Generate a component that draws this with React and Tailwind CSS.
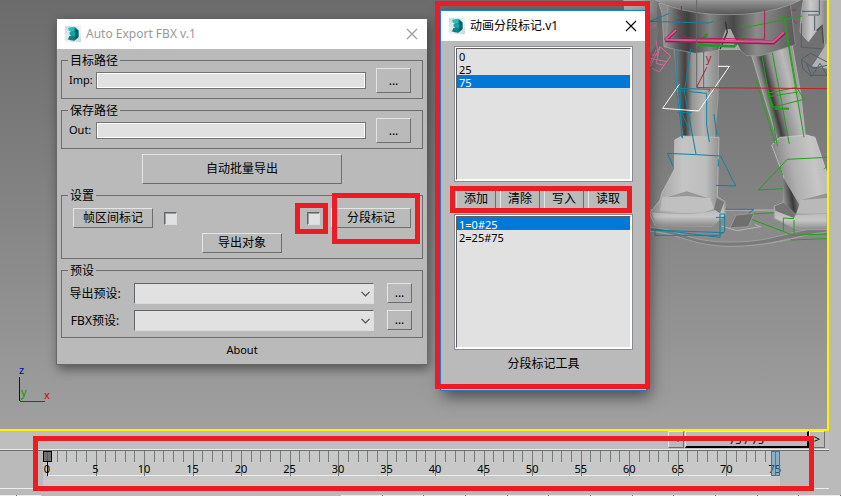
import { useId } from "react";

const RAISED =
  "border border-t-[#e4e4e4] border-l-[#e4e4e4] border-r-[#6d6d6d] border-b-[#6d6d6d] bg-[#bababa] text-black flex items-center justify-center whitespace-nowrap";
const SUNKEN =
  "border border-t-[#5f666d] border-l-[#5f666d] border-r-[#dcdcdc] border-b-[#dcdcdc]";

function MaxIcon() {
  return (
    <svg width="16" height="16" viewBox="0 0 16 16" className="shrink-0" aria-hidden="true">
      <defs>
        <linearGradient id="tile" x1="0" y1="0" x2="1" y2="1">
          <stop offset="0" stopColor="#c3dade" />
          <stop offset=".6" stopColor="#f1f5f6" />
          <stop offset="1" stopColor="#c4d4d8" />
        </linearGradient>
      </defs>
      <path d="M0 0H16V16H0Z" fill="url(#tile)" />
      <path d="M1 13L8 11L14 12L8 15.500Z" fill="#a9c4c7" />
      <path d="M3.500 2L9.500 1L13.500 4.500V11L9.500 14.500L3.500 13.500L4 10.500L6 9.500L4.500 8.500V6.500L6 5.500L4 4.500Z" fill="#12a5a6" />
      <path d="M9.500 1L13.500 4.500V11L9.500 14.500V10L10.500 7.500L9.500 5Z" fill="#05626a" />
      <path d="M3.500 2L9.500 1L9.500 5L6 5.500L4 4.500Z" fill="#29bdb9" />
      <path d="M4 10.500L9.500 10V14.500L3.500 13.500Z" fill="#098086" />
    </svg>
  );
}

function TitleBar({ title, muted }) {
  return (
    <header className="flex h-[30px] items-center gap-[5px] bg-white pr-[9px] pl-2">
      <MaxIcon />
      <h1 className={muted ? "flex-1 text-xs text-[#999999]" : "flex-1 text-xs text-black"}>{title}</h1>
      <button
        type="button"
        aria-label="关闭"
        className={muted ? "text-[#999999]" : "text-black"}
      >
        <svg width="12" height="12" viewBox="0 0 12 12" aria-hidden="true">
          <path d="M1 1L11 11M11 1L1 11" stroke="currentColor" strokeWidth="1.100" />
        </svg>
      </button>
    </header>
  );
}

function Group({ title, children }) {
  return (
    <fieldset className="min-w-0 border border-[#6d6d6d] pl-[6px]">
      <legend className="h-3 px-[2px] text-xs leading-[14px]">{title}</legend>
      {children}
    </fieldset>
  );
}

function PathRow({ label }) {
  const id = useId();
  return (
    <div className="flex items-center pt-[2px] pr-[11px] pb-[5px]">
      <label htmlFor={id} className="w-7 pl-px">{label}</label>
      <input
        id={id}
        type="text"
        className="h-[17px] min-w-0 flex-1 border border-[#747474] bg-[#e1e1e1] px-1 outline outline-1 -outline-offset-2 outline-white"
      />
      <button type="button" className={RAISED + " ml-[10px] h-[25px] w-[35px] text-xs"}>...</button>
    </div>
  );
}

function PresetRow({ label }) {
  const id = useId();
  return (
    <div className="flex">
      <label htmlFor={id} className="flex h-[21px] w-[54px] items-center justify-center whitespace-nowrap text-xs">
        {label}
      </label>
      <div className="relative ml-3 flex flex-1">
        <select id={id} className={SUNKEN + " h-[21px] w-full appearance-none bg-[#e1e1e1] px-1"} />
        <svg width="9" height="6" viewBox="0 0 9 6" className="pointer-events-none absolute top-2 right-1" aria-hidden="true">
          <path d="M.5 .8L4.500 4.800L8.500 .8" fill="none" stroke="#4c4c4c" strokeWidth="1.200" />
        </svg>
      </div>
      <button type="button" className={RAISED + " ml-[13px] h-5 w-[25px] text-xs"}>...</button>
    </div>
  );
}

function Check({ label, className }) {
  return (
    <input
      type="checkbox"
      aria-label={label}
      className={SUNKEN + " h-[13px] w-[13px] appearance-none bg-[#e1e1e1] shadow-[inset_1px_1px_0_#9a9fa4] " + className}
    />
  );
}

function ExportWindow() {
  return (
    <section className="absolute top-[19px] left-[56px] w-[371px] border-b border-l border-[#686868] bg-[#bababa] shadow-[2px_4px_10px_rgba(0,0,0,0.45)]">
      <TitleBar title="Auto Export FBX v.1" muted />
      <div className="flex flex-col gap-[5px] px-1 pt-[5px]">
        <Group title="目标路径"><PathRow label="Imp:" /></Group>
        <Group title="保存路径"><PathRow label="Out:" /></Group>
        <button type="button" className={RAISED + " h-[30px] w-[200px] self-center text-xs"}>自动批量导出</button>
        <Group title="设置">
          <div className="flex flex-col gap-[5px] pt-[7px] pr-[11px] pb-[5px] pl-[5px]">
            <div className="flex items-center">
              <button type="button" className={RAISED + " h-5 w-20 text-xs"}>帧区间标记</button>
              <Check label="帧区间标记" className="ml-[11px]" />
              <Check label="分段标记" className="ml-auto" />
              <button type="button" className={RAISED + " ml-[11px] h-5 w-20 text-xs"}>分段标记</button>
            </div>
            <button type="button" className={RAISED + " h-5 w-20 self-center text-xs"}>导出对象</button>
          </div>
        </Group>
        <Group title="预设">
          <div className="flex flex-col gap-[6px] pt-[7px] pr-[10px] pb-[6px]">
            <PresetRow label="导出预设:" />
            <PresetRow label="FBX预设:" />
          </div>
        </Group>
      </div>
      <p className="pt-1 pb-[7px] text-center leading-[15px]">About</p>
    </section>
  );
}

function ListBox({ label, items, selected }) {
  return (
    <div className="border border-[#868c96] bg-white p-px">
      <select
        size={10}
        aria-label={label}
        defaultValue={selected}
        className="block h-[132px] w-full overflow-hidden border border-t-[#5f5f5f] border-r-white border-b-white border-l-[#5f5f5f] bg-[#e1e1e1] p-0 outline-none"
      >
        {items.map((item) => (
          <option
            key={item}
            value={item}
            className="block h-[13px] min-h-0 px-[2px] py-0 leading-[11px] text-black checked:bg-[linear-gradient(#0078d7,#0078d7)] checked:[-webkit-text-fill-color:white]"
          >
            {item}
          </option>
        ))}
      </select>
    </div>
  );
}

function SegmentWindow() {
  return (
    <section className="absolute top-[10px] left-[440px] w-[207px] border border-[#1c7fd0] bg-[#bababa] shadow-[3px_6px_14px_rgba(0,0,0,0.5)]">
      <TitleBar title="动画分段标记.v1" />
      <div className="flex flex-col pt-[5px] pr-[13px] pl-[13px]">
        <ListBox label="帧" items={["0", "25", "75"]} selected="75" />
        <div className="my-[6px] flex gap-1 px-[2px]">
          {["添加", "清除", "写入", "读取"].map((name) => (
            <button key={name} type="button" className={RAISED + " h-[21px] w-10 pt-px text-xs"}>{name}</button>
          ))}
        </div>
        <div className="-mt-px">
          <ListBox label="分段" items={["1=0#25", "2=25#75"]} selected="1=0#25" />
        </div>
      </div>
      <p className="pt-[6px] pb-[18px] text-center text-xs">分段标记工具</p>
    </section>
  );
}

function Character() {
  return (
    <svg width="207" height="260" viewBox="-60 0 621 780" className="absolute top-0 right-0" aria-hidden="true">
      <defs>
        <linearGradient id="legL" x1="0" x2="1" y1="0" y2="0">
          <stop offset="0" stopColor="#858585" />
          <stop offset=".14" stopColor="#5a5a5a" />
          <stop offset=".24" stopColor="#404040" />
          <stop offset=".4" stopColor="#969696" />
          <stop offset=".65" stopColor="#b4b4b4" />
          <stop offset="1" stopColor="#8a8a8a" />
        </linearGradient>
        <linearGradient id="legR" gradientUnits="userSpaceOnUse" x1="350" x2="486" y1="260" y2="225">
          <stop offset="0" stopColor="#a8a8a8" />
          <stop offset=".14" stopColor="#8a8a8a" />
          <stop offset=".26" stopColor="#3c3c3c" />
          <stop offset=".42" stopColor="#909090" />
          <stop offset=".7" stopColor="#bababa" />
          <stop offset="1" stopColor="#8a8a8a" />
        </linearGradient>
        <linearGradient id="hip" x1="0" x2="1" y1="0" y2="0">
          <stop offset="0" stopColor="#8f8f8f" />
          <stop offset=".1" stopColor="#545454" />
          <stop offset=".17" stopColor="#3e3e3e" />
          <stop offset=".34" stopColor="#848484" />
          <stop offset=".45" stopColor="#5c5c5c" />
          <stop offset=".52" stopColor="#484848" />
          <stop offset=".7" stopColor="#8b8b8b" />
          <stop offset=".85" stopColor="#757575" />
          <stop offset="1" stopColor="#585858" />
        </linearGradient>
        <linearGradient id="belly" x1="0" x2="0" y1="0" y2="1">
          <stop offset="0" stopColor="#989898" />
          <stop offset="1" stopColor="#565656" />
        </linearGradient>
        <linearGradient id="bootL" x1="0" x2="1" y1="0" y2="0">
          <stop offset="0" stopColor="#9c9c9c" />
          <stop offset=".45" stopColor="#c4c4c4" />
          <stop offset=".75" stopColor="#bdbdbd" />
          <stop offset="1" stopColor="#7d7d7d" />
        </linearGradient>
        <linearGradient id="bootR" x1="0" x2="1" y1="0.3" y2="0">
          <stop offset="0" stopColor="#7e7e7e" />
          <stop offset=".35" stopColor="#b0b0b0" />
          <stop offset=".7" stopColor="#c6c6c6" />
          <stop offset="1" stopColor="#b4b4b4" />
        </linearGradient>
        <linearGradient id="crease" x1="0" x2="1" y1=".3" y2="0">
          <stop offset="0" stopColor="#8c8c8c" />
          <stop offset=".45" stopColor="#3a3a3a" />
          <stop offset="1" stopColor="#a4a4a4" />
        </linearGradient>
        <linearGradient id="sole" x1="0" x2="0" y1="0" y2="1">
          <stop offset="0" stopColor="#b0b0b0" />
          <stop offset=".6" stopColor="#c6c6c6" />
          <stop offset="1" stopColor="#8a8a8a" />
        </linearGradient>
        <linearGradient id="hand" x1="0" x2="1" y1="0" y2="0">
          <stop offset="0" stopColor="#b4b4b4" />
          <stop offset=".5" stopColor="#a8a8a8" />
          <stop offset="1" stopColor="#777" />
        </linearGradient>
        <linearGradient id="handR" x1="0" x2="1" y1="0" y2="0">
          <stop offset="0" stopColor="#8a8a8a" />
          <stop offset=".4" stopColor="#cacaca" />
          <stop offset=".75" stopColor="#a8a8a8" />
          <stop offset="1" stopColor="#808080" />
        </linearGradient>
      </defs>

      <path d="M-50 0H54L50 60L56 90L50 130L34 158L10 170L-45 60Z" fill="url(#hand)" />
      <path d="M56 10L96 14L98 146L72 140L66 40Z" fill="#8c8c8c" stroke="#b3b3b3" strokeWidth="2" />
      <path d="M0 630C80 625 400 625 561 650V690C450 715 420 735 280 738C170 736 120 700 0 690Z" fill="#8a8a8a" stroke="#a8a8a8" strokeWidth="2" />
      <path d="M30 682C110 684 145 728 270 726C400 728 440 690 561 682V696C470 705 390 740 270 739C150 738 110 696 30 694Z" fill="#7a7a7a" stroke="#adadad" strokeWidth="2" />
      <path d="M250 630H410M244 678L290 692L362 680L345 674" fill="none" stroke="#b5b5b5" strokeWidth="3" />
      <path d="M288 645L342 640L325 680L270 684Z" fill="#6f6f6f" stroke="#a8a8a8" strokeWidth="2" />

      <path d="M104 145L236 145L234 300L222 425H130L112 280Z" fill="url(#legL)" stroke="#a9a9a9" strokeWidth="2" />
      <path d="M333 160L456 130L482 280L498 425H414L372 290Z" fill="url(#legR)" stroke="#c0c0c0" strokeWidth="2" />
      <path d="M85 0L78 140L96 146L165 160L235 151L258 88L272 90L290 140L318 166L360 168L466 134L450 0Z" fill="url(#hip)" stroke="#9a9a9a" strokeWidth="2" />
      <path d="M258 88L272 88L302 150L235 150Z" fill="#a8a8a8" />
      <path d="M45 0C110 34 190 44 270 44C350 44 430 28 482 0Z" fill="url(#belly)" stroke="#a6a6a6" strokeWidth="2" />
      <path d="M256 65L262 96L240 148" fill="none" stroke="#333" strokeWidth="4" />

      <path d="M104 420L125 408L237 412L232 590L255 605V648L215 678L45 676L28 640L60 600L65 580L103 508Z" fill="url(#bootL)" stroke="#c7c7c7" strokeWidth="2" />
      <path d="M34 636C90 640 180 645 225 630L254 606V648L215 679L48 678Z" fill="url(#sole)" stroke="#9a9a9a" strokeWidth="2" />
      <path d="M66 592L140 578L210 594L222 625L190 638L60 632Z" fill="#c0c0c0" />
      <path d="M80 592L140 574L204 594L140 588Z" fill="#989898" />
      <path d="M230 594L252 608L240 640L222 628Z" fill="#787878" />

      <path d="M395 435L420 412L500 405L525 412L561 520V688H472L403 655V618L430 608L431 530Z" fill="url(#bootR)" stroke="#d5d5d5" strokeWidth="2" />
      <path d="M428 530L478 614L468 642L430 608Z" fill="url(#crease)" />
      <path d="M403 618L470 644L561 640V688L472 689L404 655Z" fill="url(#sole)" stroke="#9a9a9a" strokeWidth="2" />
      <path d="M405 618L430 608L468 642L462 654L406 632Z" fill="#747474" />
      <path d="M484 598L561 582V640H470Z" fill="#b9b9b9" />
      <path d="M484 600L561 580V594Z" fill="#969696" />

      <path d="M490 0H561V205L540 200L518 198L556 142L545 78L530 92L505 125L480 96L484 40Z" fill="url(#handR)" stroke="#c0c0c0" strokeWidth="2" />
      <path d="M518 198L561 128V205Z" fill="#b2b2b2" />
      <path d="M530 92L546 78L550 130" fill="none" stroke="#505050" strokeWidth="5" />

      <g fill="none" stroke="#4d6069" strokeWidth="3">
        <path d="M486 34H537M538 0V45H504M524 48V92M484 70V142L545 146M484 178L512 160L561 186M484 178L488 205L510 226H561M484 178L520 205L561 196M500 190L515 230L540 190L561 226" />
      </g>
      <g fill="none" stroke="#0f83a0" strokeWidth="3">
        <path d="M30 64L88 40M30 64L205 69L220 64M118 52H106L109 265L128 415M153 145L133 275L168 462M191 155V265M109 265L210 268L206 276M120 272L200 280M112 338H155M120 262L125 412M200 280V375L208 426M222 342L230 405M126 340L148 390" />
        <path d="M82 460L170 464L242 468L287 558L228 556M82 460L100 500M235 478V500M256 628H342L326 640M45 690V706H236L254 695V642H240V712L45 688M228 652H256M35 690L250 698" />
      </g>
      <g fill="none" stroke="#25a01c" strokeWidth="3">
        <path d="M302 80L320 82L486 48M415 52L430 48L492 412M366 168L386 280L412 438M397 158L448 432M348 238L405 430M380 280L470 262L492 298L398 322L384 290M384 290L474 276M400 322L384 280M432 50L470 265" />
        <path d="M561 472L442 478L355 570L428 566M420 500L428 526M340 642L402 638M335 658L460 706L561 702M430 654V694M462 660V700M430 654L462 656M450 720L561 716M552 508L561 498" />
      </g>
      <path d="M170 135L282 139L312 108M170 135L202 102" fill="none" stroke="#23962a" strokeWidth="8" />
      <path d="M404 326H447" stroke="#25a01c" strokeWidth="6" />
      <path d="M76 121L400 128L434 97M76 121L108 90" fill="none" stroke="#8b2550" strokeWidth="11" />
      <path d="M76 119L400 126L432 96M76 119L108 90" fill="none" stroke="#df5293" strokeWidth="6" />
      <path d="M124 18V108L150 114L374 118V30M455 30H468M462 62L468 70" fill="none" stroke="#b51d55" strokeWidth="3" />
      <path d="M30 85L48 75M48 120L55 165L35 165M30 200L60 140L92 168L58 216L36 205M48 150L30 190M60 140L48 190L72 196M30 175L80 185" fill="none" stroke="#db6fa4" strokeWidth="3" />
      <path d="M234 199H268L176 333L68 325L118 253" fill="none" stroke="#fff" strokeWidth="3" />
      <path d="M170 0V262" stroke="#666" strokeWidth="3" />
      <path d="M170 262L200 202M170 263L561 266" fill="none" stroke="#bd2227" strokeWidth="3" />
      <text x="197" y="187" fontSize="34" fill="#bd2227" fontFamily="Noto Sans">y</text>
    </svg>
  );
}

function AxisTripod() {
  return (
    <svg width="44" height="50" viewBox="0 -8 44 50" className="absolute bottom-[21px] left-4" aria-hidden="true" fontFamily="Noto Sans" fontSize="11">
      <path d="M3.500 11V35" stroke="#0202b4" />
      <path d="M4 35.500H29" stroke="#c20808" />
      <path d="M4 35L6 33" stroke="#0a9a0a" />
      <text x="3" y="8" fill="#0202b4">z</text>
      <text x="5" y="30" fill="#0a9a0a">y</text>
      <text x="28" y="33" fill="#c20808">x</text>
    </svg>
  );
}

const FRAMES = Array.from({ length: 75 }, (_, i) => i);
const LABEL = "absolute top-[11px] left-0 -translate-x-1/2 leading-[14px]";

function Timeline() {
  return (
    <footer className="flex h-[65px] shrink-0 flex-col">
      <div className="mr-3 flex h-[19px] border-b border-[#ececec] bg-[#bebebe] pr-1">
        <button type="button" className={RAISED + " ml-auto h-[17px] w-4"}>&lt;</button>
        <button type="button" className="ml-px h-[17px] w-[124px] border-t border-r-2 border-b-2 border-l border-t-[#e4e4e4] border-r-black border-b-black border-l-[#e4e4e4] bg-[#bababa]">
          75 / 75
        </button>
        <button type="button" className={RAISED + " h-[17px] w-4"}>&gt;</button>
      </div>
      <div className="mr-3 flex h-[37px] border-t border-[#6d6d6d] pr-[49px] pl-[43px]">
        <div className="relative flex-1 bg-[#c8c8c8] pr-1 pl-1">
          <div className="flex h-[25px] border-b border-[#ececec]">
            {FRAMES.map((f) => (
              <div key={f} className="relative flex-1">
                <div className={f % 5 === 0 ? "h-[25px] border-l border-[#747b7b]" : "h-[11px] border-l border-[#747b7b]"} />
                {f % 5 === 0 && <span className={LABEL}>{f}</span>}
              </div>
            ))}
            <div className="relative w-px bg-[#45606f]"><span className={LABEL}>75</span></div>
          </div>
          <div className="absolute top-0 left-0 h-[11px] w-[9px] border border-black bg-[#4c4c4c]/70" />
          <div className="absolute top-[11px] left-1 h-[14px] w-px bg-black" />
          <div className="absolute top-0 right-0 h-[25px] w-[9px] border border-[#4f7085] bg-[#4f92c4]/50" />
        </div>
      </div>
      <div className="flex h-[9px] flex-col justify-between pt-px">
        <div className="mr-3 h-px bg-[#ececec]" />
        <div className="flex h-px">
          <div className="w-4 bg-[#ececec]" />
          <div className="w-px bg-[#6d6d6d]" />
          <div className="w-6 bg-[#ececec]" />
          <div className="w-[300px]" />
          <div className="flex flex-1">
            {FRAMES.slice(0, 12).map((f) => (
              <div key={f} className="flex-1 border-r border-[#6d6d6d] bg-[#ececec]" />
            ))}
          </div>
        </div>
      </div>
    </footer>
  );
}

const MARK = "pointer-events-none absolute border-[5px] border-[#ed1c24]";

export default function App() {
  return (
    <main className="relative flex h-screen min-h-[496px] flex-col overflow-hidden bg-[#bababa] font-['Noto_Sans','Noto_Sans_CJK_SC',sans-serif] text-[11px] text-black">
      <div className="relative mr-3 flex-1 border-r-2 border-b-2 border-[#fff200] bg-linear-to-b from-[#6b6b6b] to-[#a0a0a0]">
        <Character />
        <AxisTripod />
        <ExportWindow />
        <SegmentWindow />
      </div>
      <Timeline />
      <div className={MARK + " top-px left-[435px] h-[388px] w-[215px]"} />
      <div className={MARK + " top-[186px] left-[450px] h-[27px] w-[182px]"} />
      <div className={MARK + " top-[203px] left-[295px] h-[31px] w-[33px]"} />
      <div className={MARK + " top-[193px] left-[332px] h-[51px] w-[88px]"} />
      <div className={MARK + " right-[27px] bottom-[5px] left-[33px] h-[55px]"} />
    </main>
  );
}
